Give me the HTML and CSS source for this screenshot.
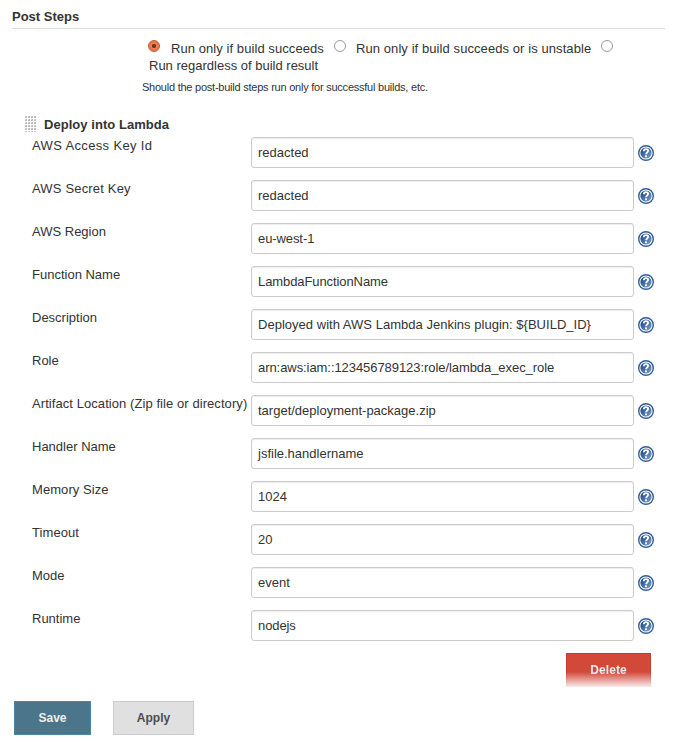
FILE: index.html
```html
<!DOCTYPE html>
<html lang="en">
<head>
<meta charset="utf-8">
<title>Post Steps</title>
<link rel="stylesheet" href="styles.css">
</head>
<body>
<svg class="defs" width="0" height="0" aria-hidden="true">
  <defs>
    <linearGradient id="blue" x1="0" y1="0" x2="1" y2="1">
      <stop offset="0.2" stop-color="#25538f"/>
      <stop offset="0.95" stop-color="#7c9cc8"/>
    </linearGradient>
    <symbol id="help" viewBox="0 0 16 16">
      <circle cx="8" cy="8" r="7.3" fill="#fff" stroke="#2f5f9c" stroke-width="1.4"/>
      <circle cx="8" cy="8" r="5.6" fill="url(#blue)"/>
      <path d="M5.8 6.2C5.9 4.7 6.8 4.1 8 4.1c1.3 0 2.1.7 2.1 1.8C10.1 7.4 8.1 7.4 8.1 9.3" fill="none" stroke="#fff" stroke-width="1.8"/>
      <rect x="7" y="10.4" width="2" height="1.8" fill="#fff"/>
    </symbol>
  </defs>
</svg>
<main class="page">
  <h1 class="section-title">Post Steps</h1>
  <div class="choices">
    <div class="choice-line">
      <i class="radio checked"></i><span class="t-succeeds">Run only if build succeeds</span>
      <i class="radio"></i><span class="t-unstable">Run only if build succeeds or is unstable</span>
      <i class="radio"></i>
    </div>
    <div class="choice-last"><span>Run regardless of build result</span></div>
    <p class="hint">Should the post-build steps run only for successful builds, etc.</p>
  </div>
  <div class="step-head"><i class="grip"></i><h2>Deploy into Lambda</h2></div>
  <form class="fields">
    <div class="row"><label class="looser">AWS Access Key Id</label><div class="input">redacted</div><svg class="help"><use href="#help"/></svg></div>
    <div class="row"><label class="loose">AWS Secret Key</label><div class="input">redacted</div><svg class="help"><use href="#help"/></svg></div>
    <div class="row"><label>AWS Region</label><div class="input tight">eu-west-1</div><svg class="help"><use href="#help"/></svg></div>
    <div class="row"><label>Function Name</label><div class="input tight">LambdaFunctionName</div><svg class="help"><use href="#help"/></svg></div>
    <div class="row"><label>Description</label><div class="input wide">Deployed with AWS Lambda Jenkins plugin: ${BUILD_ID}</div><svg class="help"><use href="#help"/></svg></div>
    <div class="row"><label>Role</label><div class="input snug">arn:aws:iam::123456789123:role/lambda_exec_role</div><svg class="help"><use href="#help"/></svg></div>
    <div class="row"><label class="airy">Artifact Location (Zip file or directory)</label><div class="input">target/deployment-package.zip</div><svg class="help"><use href="#help"/></svg></div>
    <div class="row"><label>Handler Name</label><div class="input">jsfile.handlername</div><svg class="help"><use href="#help"/></svg></div>
    <div class="row"><label class="airy">Memory Size</label><div class="input">1024</div><svg class="help"><use href="#help"/></svg></div>
    <div class="row"><label class="airy">Timeout</label><div class="input">20</div><svg class="help"><use href="#help"/></svg></div>
    <div class="row"><label>Mode</label><div class="input">event</div><svg class="help"><use href="#help"/></svg></div>
    <div class="row"><label>Runtime</label><div class="input tight">nodejs</div><svg class="help"><use href="#help"/></svg></div>
  </form>
  <div class="delete-bar"><button class="btn delete">Delete</button></div>
  <div class="actions"><button class="btn save">Save</button><button class="btn apply">Apply</button></div>
</main>
</body>
</html>
```
FILE: styles.css
```css
* { box-sizing: border-box; }
body {
  margin: 0;
  background: #fff;
  color: #333;
  font: 13px/17px "Liberation Sans", Arial, sans-serif;
}
.defs { display: block; }
.page { padding: 8px 10px 0 12px; }
.section-title {
  margin: 0;
  height: 21px;
  border-bottom: 1px solid #ddd;
  font-size: 13px;
  line-height: 17px;
}
.choices { padding: 11px 0 0 130px; white-space: nowrap; }
.choice-line { display: flex; height: 17px; padding-left: 6px; }
.radio {
  flex: none;
  width: 12px;
  height: 12px;
  border: 1px solid #999;
  border-radius: 50%;
  background: #fff;
}
.radio.checked {
  border-color: #c4552e;
  background: radial-gradient(circle, #683527 0 1.6px, #ef8050 2.5px 3.4px, #dd6a3d 4px, #f08a62 5px);
}
.t-succeeds { width: 163px; margin-left: 11px; letter-spacing: .07px; }
.t-unstable { width: 245px; margin-left: 10px; letter-spacing: .08px; }
.choice-last { padding-left: 7px; }
.hint { margin: 5px 0 0; font-size: 11px; line-height: 16px; letter-spacing: -.235px; }
.step-head { display: flex; height: 21px; margin-top: 21px; padding-left: 13px; }
.step-head h2 { margin: 0 0 0 7px; font-size: 13px; line-height: 17px; letter-spacing: .05px; }
.grip {
  width: 12px;
  height: 16px;
  background:
    conic-gradient(from 0deg at 1px 1px, transparent 75%, #ccc 0) 0 0 / 3px 3px,
    conic-gradient(from 0deg at 2px 2px, transparent 75%, #bbb 0) 0 0 / 3px 3px;
}
.fields { margin: 0; padding-left: 20px; }
.row {
  display: grid;
  grid-template-columns: 219px 383px 16px;
  height: 43px;
  align-items: start;
}
.row label { white-space: nowrap; }
.looser { letter-spacing: .35px; }
.loose { letter-spacing: .17px; }
.airy { letter-spacing: .07px; }
.wide { letter-spacing: .02px; }
.snug { letter-spacing: -.065px; }
.tight { letter-spacing: -.09px; }
.input {
  height: 31px;
  padding: 0 6px;
  border: 1px solid #ccc;
  border-radius: 3px;
  box-shadow: inset 0 1px 1px rgba(0, 0, 0, .075);
  line-height: 29px;
  white-space: nowrap;
}
.help { width: 16px; height: 16px; margin: 8px 0 0 4px; }
.delete-bar { display: flex; justify-content: flex-end; padding-right: 14px; }
.btn {
  height: 34px;
  padding: 0;
  border: 1px solid;
  font: bold 12px/32px "Liberation Sans", Arial, sans-serif;
}
.delete {
  width: 85px;
  border-width: 1px 1px 0;
  border-color: #c43b2b;
  background: #d24939;
  color: #eee;
  padding-bottom: 1px;
  line-height: 30px;
  letter-spacing: .1px;
  -webkit-mask-image: linear-gradient(#000 19px, rgba(0, 0, 0, .1) 34px);
  mask-image: linear-gradient(#000 19px, rgba(0, 0, 0, .1) 34px);
}
.actions { display: flex; gap: 22px; margin-top: 14px; padding-left: 2px; }
.save { width: 77px; border-color: #4a87a2; background: #4b758b; color: #eee; }
.apply { width: 81px; border-color: #ccc; background: #e0e0e0; color: #4d4d4d; }
```
